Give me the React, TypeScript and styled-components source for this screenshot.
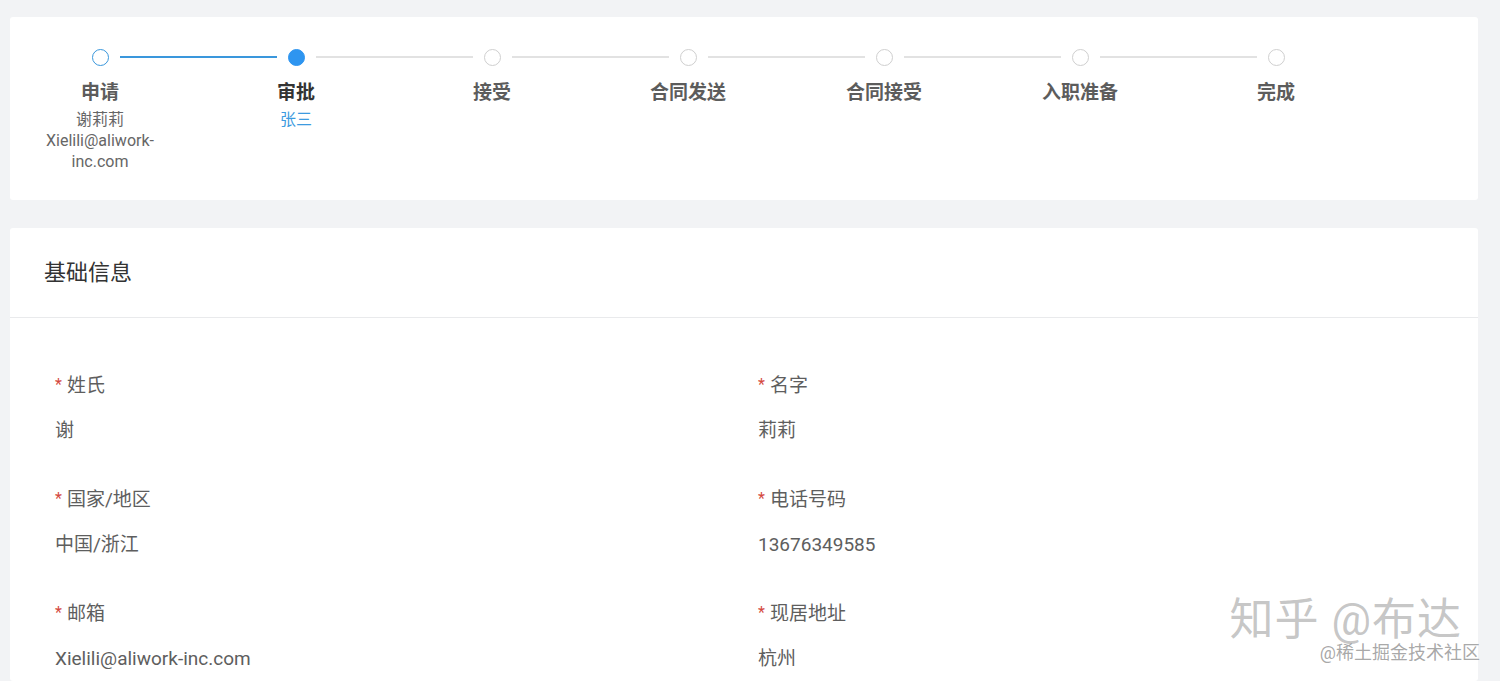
import React from "react";
import styled, { createGlobalStyle } from "styled-components";

const GlobalStyle = createGlobalStyle`
  html, body {
    margin: 0;
    padding: 0;
    background: #f2f3f5;
    font-family: Roboto, "Noto Sans CJK SC", "Noto Sans", sans-serif;
    overflow: hidden;
  }
`;

const Page = styled.div`
  position: relative;
  width: 1500px;
  height: 681px;
  padding: 17px 22px 0 10px;
  box-sizing: border-box;
  display: flex;
  flex-direction: column;
  gap: 28px;
  overflow: hidden;
`;

const Card = styled.div`
  background: #fff;
  border-radius: 3px;
`;

const StepsCard = styled(Card)`
  height: 183px;
  box-sizing: border-box;
  padding: 32px 0 0 82px;
  display: flex;
`;

const Step = styled.div`
  width: 196px;
  flex-shrink: 0;
  display: flex;
  flex-direction: column;
`;

const StepHead = styled.div`
  display: flex;
  align-items: center;
  height: 16px;
`;

type DotState = "done" | "current" | "wait";

const Dot = styled.span<{ $state: DotState }>`
  width: 17px;
  height: 17px;
  box-sizing: border-box;
  border-radius: 50%;
  flex-shrink: 0;
  border: 1.5px solid
    ${(p) => (p.$state === "wait" ? "#cfcfcf" : "#3a97dc")};
  background: ${(p) => (p.$state === "current" ? "#2e95f0" : "#fff")};
  ${(p) => (p.$state === "current" ? "border-color: #2e95f0;" : "")}
`;

const Line = styled.span<{ $active: boolean }>`
  flex: 1;
  height: 1.5px;
  margin: 0 11px 0 11px;
  background: ${(p) => (p.$active ? "#3a97dc" : "#e2e2e2")};
`;

/* label block is centred under the dot, so it reaches back past the dot's left edge */
const StepBody = styled.div`
  width: 124px;
  margin-left: -54px;
  text-align: center;
  padding-top: 16px;
`;

const StepTitle = styled.div<{ $current: boolean }>`
  font-size: 19px;
  font-weight: 700;
  line-height: 24px;
  color: ${(p) => (p.$current ? "#333" : "#5c5c5c")};
  margin-bottom: 4px;
`;

const StepSub = styled.div<{ $blue?: boolean }>`
  font-size: 16px;
  line-height: 21px;
  color: ${(p) => (p.$blue ? "#3d9be0" : "#666")};
  word-break: break-word;
`;

const InfoCard = styled(Card)`
  flex: 1;
`;

const InfoHeader = styled.div`
  height: 90px;
  box-sizing: border-box;
  padding: 0 34px 6px;
  display: flex;
  align-items: center;
  border-bottom: 1px solid #e9eaec;
  font-size: 22px;
  color: #333;
`;

const FormGrid = styled.div`
  display: grid;
  grid-template-columns: 703px 1fr;
  padding: 55px 45px 0 45px;
  row-gap: 43px;
`;

const Field = styled.div`
  display: flex;
  flex-direction: column;
  gap: 19px;
`;

const Label = styled.div`
  font-size: 19px;
  line-height: 26px;
  color: #5e5e5e;
  display: flex;
  align-items: center;
`;

const Star = styled.span`
  color: #d4493e;
  font-size: 16px;
  margin-right: 5px;
  position: relative;
  top: -1px;
`;

const Value = styled.div`
  font-size: 19px;
  line-height: 26px;
  color: #5e5e5e;
`;

const Watermark = styled.div`
  position: absolute;
  right: 22px;
  bottom: 18px;
  display: flex;
  flex-direction: column;
  align-items: flex-end;
  pointer-events: none;
`;

const WatermarkMain = styled.div`
  font-size: 44px;
  line-height: 40px;
  color: rgba(150, 150, 150, 0.55);
  letter-spacing: 1px;
  margin-right: 16px;
  margin-bottom: 3px;
`;

const WatermarkSub = styled.div`
  font-size: 18px;
  line-height: 20px;
  color: rgba(130, 130, 130, 0.7);
  margin-right: -2px;
`;

type StepData = { title: string; state: DotState; subs?: string[]; blue?: boolean };

const steps: StepData[] = [
  { title: "申请", state: "done", subs: ["谢莉莉", "Xielili@aliwork-inc.com"] },
  { title: "审批", state: "current", subs: ["张三"], blue: true },
  { title: "接受", state: "wait" },
  { title: "合同发送", state: "wait" },
  { title: "合同接受", state: "wait" },
  { title: "入职准备", state: "wait" },
  { title: "完成", state: "wait" },
];

const fields = [
  { label: "姓氏", value: "谢" },
  { label: "名字", value: "莉莉" },
  { label: "国家/地区", value: "中国/浙江" },
  { label: "电话号码", value: "13676349585" },
  { label: "邮箱", value: "Xielili@aliwork-inc.com" },
  { label: "现居地址", value: "杭州" },
];

export default function App() {
  return (
    <>
      <GlobalStyle />
      <Page>
        <StepsCard>
          {steps.map((s, i) => (
            <Step key={s.title}>
              <StepHead>
                <Dot $state={s.state} />
                {i < steps.length - 1 && <Line $active={s.state === "done"} />}
              </StepHead>
              <StepBody>
                <StepTitle $current={s.state === "current"}>{s.title}</StepTitle>
                {s.subs?.map((t) => (
                  <StepSub key={t} $blue={s.blue}>
                    {t}
                  </StepSub>
                ))}
              </StepBody>
            </Step>
          ))}
        </StepsCard>
        <InfoCard>
          <InfoHeader>基础信息</InfoHeader>
          <FormGrid>
            {fields.map((f) => (
              <Field key={f.label}>
                <Label>
                  <Star>*</Star>
                  {f.label}
                </Label>
                <Value>{f.value}</Value>
              </Field>
            ))}
          </FormGrid>
        </InfoCard>
        <Watermark>
          <WatermarkMain>知乎 @布达</WatermarkMain>
          <WatermarkSub>@稀土掘金技术社区</WatermarkSub>
        </Watermark>
      </Page>
    </>
  );
}
